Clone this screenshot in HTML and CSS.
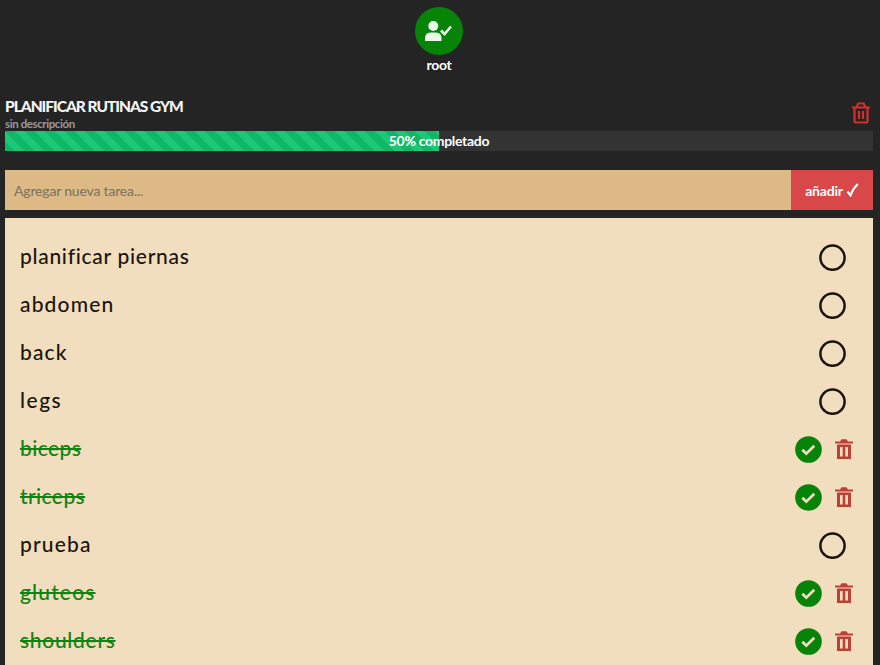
FILE: index.html
```html
<!DOCTYPE html>
<html lang="es">
<head>
<meta charset="utf-8">
<title>Planificar rutinas gym</title>
<link rel="stylesheet" href="styles.css">
</head>
<body>
<svg class="defs" aria-hidden="true">
  <symbol id="trash" viewBox="0 0 18 20">
    <path d="M0 2.500h5l1.500-2.200h5L13 2.500h5v2H0z"/>
    <path fill-rule="evenodd" d="M2 5.500h14V20H2zM5 8v9.500h2.700V8zM10.300 8v9.500H13V8z"/>
  </symbol>
  <symbol id="check" viewBox="0 0 27 27">
    <circle cx="13.500" cy="13.500" r="13.300" fill="#078307"/>
    <path d="M7.300 13.700l4 4 8-8" fill="none" stroke="#f0debf" stroke-width="2.700"/>
  </symbol>
  <symbol id="ring" viewBox="0 0 27 27">
    <circle cx="13.500" cy="13.700" r="12.100" fill="none" stroke="#1c140c" stroke-width="2.500"/>
  </symbol>
</svg>
<header class="user">
  <div class="avatar">
    <svg width="30" height="22" viewBox="0 0 30 22">
      <circle cx="9.300" cy="6" r="5" fill="#e9fbe9"/>
      <path d="M1 21v-2.500Q1 12.500 6.500 12.500h5.500Q17.500 12.500 17.500 18.500V21z" fill="#e9fbe9"/>
      <path d="M17 10.500l3.500 3.500L27 6.500" fill="none" stroke="#e9fbe9" stroke-width="2.600"/>
    </svg>
  </div>
  <span class="username">root</span>
</header>
<main>
  <section class="heading">
    <div>
      <h1>PLANIFICAR RUTINAS GYM</h1>
      <p>sin descripción</p>
    </div>
    <svg class="delete-list" viewBox="0 0 20 22">
      <path d="M1 5.500h18M5.500 5l1.800-3.500h5.400L14.500 5M3.500 6v13.500q0 1 1 1h11q1 0 1-1V6M8 9v8M12 9v8"/>
    </svg>
  </section>
  <div class="progress"><div class="bar"></div><span class="label">50% completado</span></div>
  <form class="add">
    <input type="text" placeholder="Agregar nueva tarea...">
    <button type="button">añadir
      <svg width="13" height="14" viewBox="0 0 13 14"><path d="M1.500 8.500l3 4Q7 5.500 11.800 1" fill="none" stroke="#fff" stroke-width="2.100"/></svg>
    </button>
  </form>
  <ul class="tasks">
    <li><span class="t1">planificar piernas</span><svg class="ring"><use href="#ring"/></svg></li>
    <li><span class="t2">abdomen</span><svg class="ring"><use href="#ring"/></svg></li>
    <li><span class="t2">back</span><svg class="ring"><use href="#ring"/></svg></li>
    <li><span class="t3">legs</span><svg class="ring"><use href="#ring"/></svg></li>
    <li class="done"><span class="t4">biceps</span><svg class="ok"><use href="#check"/></svg><svg class="bin"><use href="#trash"/></svg></li>
    <li class="done"><span class="t4">triceps</span><svg class="ok"><use href="#check"/></svg><svg class="bin"><use href="#trash"/></svg></li>
    <li><span class="t2">prueba</span><svg class="ring"><use href="#ring"/></svg></li>
    <li class="done"><span class="t2">gluteos</span><svg class="ok"><use href="#check"/></svg><svg class="bin"><use href="#trash"/></svg></li>
    <li class="done"><span class="t1">shoulders</span><svg class="ok"><use href="#check"/></svg><svg class="bin"><use href="#trash"/></svg></li>
  </ul>
</main>
</body>
</html>
```
FILE: styles.css
```css
* { box-sizing: border-box; margin: 0; padding: 0; }
body {
  height: 665px;
  overflow: hidden;
  background: #242424;
  color: #fff;
  font-family: Lato, "Open Sans", sans-serif;
}
svg { display: block; }
.defs { display: none; }
.user {
  height: 97px;
  padding-top: 7px;
  margin-right: 2px;
  display: flex;
  flex-direction: column;
  align-items: center;
}
.avatar {
  width: 48px;
  height: 48px;
  border-radius: 50%;
  background: #078307;
  display: flex;
  align-items: center;
  justify-content: center;
}
.username { font-size: 14px; font-weight: 700; line-height: 20px; letter-spacing: -0.3px; }
main { padding: 0 7px 0 5px; }
.heading {
  height: 34px;
  display: flex;
  justify-content: space-between;
}
h1 { font-size: 15.5px; font-weight: 900; line-height: 19px; letter-spacing: -1.02px; color: #f4f4f4; white-space: nowrap; }
.heading p { font-size: 11.5px; font-weight: 700; line-height: 15px; letter-spacing: -0.4px; color: #999; }
.delete-list {
  width: 20px;
  height: 22px;
  margin: 5px 2px 0 0;
  fill: none;
  stroke: #d32f2f;
  stroke-width: 2.2;
}
.progress {
  height: 20px;
  background: #333;
  display: grid;
}
.bar, .label { grid-area: 1 / 1; }
.bar {
  width: 50%;
  background: linear-gradient(45deg, #0fb767 25%, #1cc878 25%, #1cc878 50%, #0fb767 50%, #0fb767 75%, #1cc878 75%) 0 0 / 20px 20px;
}
.label { text-align: center; font-size: 14px; font-weight: 700; line-height: 20px; letter-spacing: -0.3px; }
.add { height: 40px; margin-top: 19px; display: flex; }
.add input {
  flex: 1;
  border: 0;
  padding: 0 9px;
  background: #ddba85;
  font: 500 14px Lato, sans-serif;
  letter-spacing: -0.2px;
}
.add input::placeholder { color: #837560; }
.add button {
  width: 82px;
  border: 0;
  background: #d84848;
  color: #fff;
  font: 700 14px Lato, sans-serif;
  letter-spacing: -0.2px;
  display: flex;
  align-items: center;
  justify-content: center;
  gap: 3px;
}
.tasks {
  margin-top: 8px;
  padding: 16px 27px 16px 15px;
  background: #f0debf;
  color: #1c140c;
  list-style: none;
}
.tasks li { height: 48px; display: flex; align-items: center; }
.tasks li span { margin: -4px auto 0 0; font-size: 21px; line-height: 28px; font-weight: 500; }
.tasks li .t1 { letter-spacing: 0.7px; }
.tasks li .t2 { letter-spacing: 1.15px; }
.tasks li .t3 { letter-spacing: 1.5px; }
.tasks li .t4 { letter-spacing: 0.4px; }
.tasks .done { color: #118311; margin-right: -7px; }
.tasks .done span { text-decoration: line-through 2px; }
.ring { width: 27px; height: 27px; margin-top: -1px; }
.ok { width: 27px; height: 27px; margin: -1px 13px 0 0; }
.bin { width: 18px; height: 20px; margin-top: -2px; fill: #bd4137; }
```
